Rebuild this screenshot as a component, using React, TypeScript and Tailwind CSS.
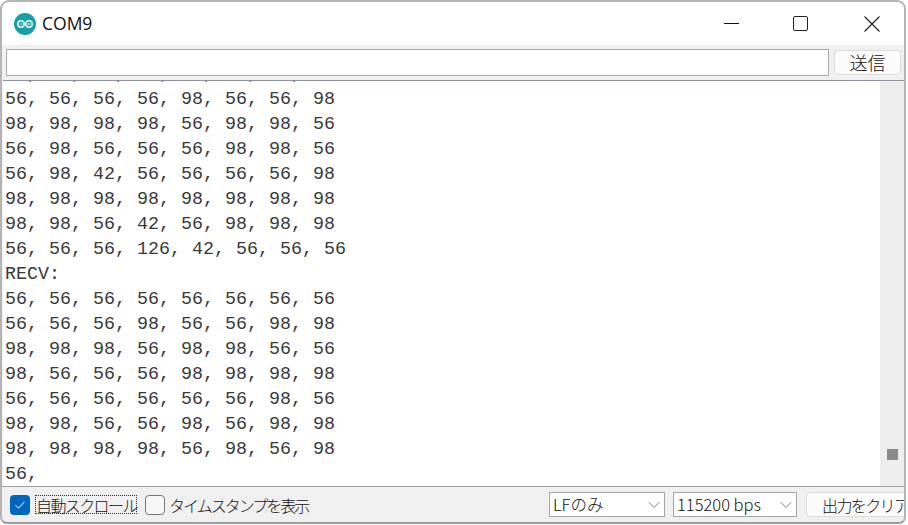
import { ChevronDown } from "lucide-react";

const lines = [
  "98, 56, 98, 56, 56, 98, 56, 98",
  "56, 56, 56, 56, 98, 56, 56, 98",
  "98, 98, 98, 98, 56, 98, 98, 56",
  "56, 98, 56, 56, 56, 98, 98, 56",
  "56, 98, 42, 56, 56, 56, 56, 98",
  "98, 98, 98, 98, 98, 98, 98, 98",
  "98, 98, 56, 42, 56, 98, 98, 98",
  "56, 56, 56, 126, 42, 56, 56, 56",
  "RECV:",
  "56, 56, 56, 56, 56, 56, 56, 56",
  "56, 56, 56, 98, 56, 56, 98, 98",
  "98, 98, 98, 56, 98, 98, 56, 56",
  "98, 56, 56, 56, 98, 98, 98, 98",
  "56, 56, 56, 56, 56, 56, 98, 56",
  "98, 98, 56, 56, 98, 56, 98, 98",
  "98, 98, 98, 98, 56, 98, 56, 98",
  "56,",
];

const jp = "font-['Noto_Sans_CJK_JP','Liberation_Sans',sans-serif]";

const ArduinoLogo = () => (
  <svg width="22" height="22" viewBox="0 0 22 22">
    <circle cx="11" cy="11" r="11" fill="#17a1a5" />
    <circle cx="7" cy="11" r="3.2" fill="none" stroke="#e6f6f6" strokeWidth="1.5" />
    <circle cx="15" cy="11" r="3.2" fill="none" stroke="#e6f6f6" strokeWidth="1.5" />
    <path d="M5.8 11h2.4M13.8 11h2.4M15 9.8v2.4" stroke="#e6f6f6" strokeWidth="0.9" />
  </svg>
);

const Dropdown = ({ label, width }: { label: string; width: string }) => (
  <div className={`${width} h-[25px] flex items-center justify-between border border-[#a6a6a6] bg-white pl-[3px]`}>
    <span className="text-[16.5px] font-light text-[#111] whitespace-nowrap">{label}</span>
    <ChevronDown size={20} strokeWidth={0.8} className="text-[#444]" />
  </div>
);

export default function App() {
  return (
    <div className="w-[908px] h-[525px] bg-white overflow-hidden">
      <div className={`w-[906px] h-[524px] flex flex-col rounded-t-[9px] rounded-b-[7px] border-2 border-[#b4b4b4] border-b-[#9c9c9c] overflow-hidden bg-[#f0f0f0] ${jp}`}>
        <div className="h-[43px] shrink-0 bg-white flex items-center pl-[12px]">
          <ArduinoLogo />
          <span className="ml-[6px] text-[17.5px] text-[#111] font-['Open_Sans',sans-serif]">COM9</span>
          <div className="ml-auto flex items-center">
            <div className="w-[59px] flex justify-center"><div className="w-[15px] h-px bg-[#111]" /></div>
            <div className="w-[78px] flex justify-center"><div className="w-[15px] h-[15px] border-[1.5px] border-[#222] rounded-[2px]" /></div>
            <div className="w-[65px] flex justify-center">
              <svg width="16" height="16" viewBox="0 0 16 16"><path d="M0.5 0.5l15 15M15.5 0.5l-15 15" stroke="#222" strokeWidth="1.2" /></svg>
            </div>
          </div>
        </div>
        <div className="h-[35px] shrink-0 flex items-center pl-[4px] pr-[3px] gap-[5px]">
          <div className="h-[27px] flex-1 bg-white border border-[#a9a9a9]" />
          <div className="w-[67px] h-[25px] bg-[#fbfbfb] border border-[#dcdcdc] rounded-[4px] flex items-center justify-center text-[18px] font-light text-[#111]">送信</div>
        </div>
        <div className="h-[406px] shrink-0 flex border-t border-[#8b929b] ml-px bg-white">
          <div className="flex-1 flex flex-col justify-end overflow-hidden pl-[2px] font-['Liberation_Mono',monospace] text-[18.33px] leading-[25px] text-[#3a3a3a] whitespace-pre">
            {lines.map((line, i) => (
              <div key={i} className="shrink-0 h-[25px] translate-y-[1px]">{line}</div>
            ))}
          </div>
          <div className="w-[24px] bg-[#eeeeee] flex flex-col justify-end items-center pb-[26px]">
            <div className="w-[11px] h-[11px] bg-[#8a8a8a]" />
          </div>
        </div>
        <div className="flex-1 flex items-center border-t border-[#a0a0a0] pl-[8px]">
          <div className="w-[20px] h-[20px] rounded-[4px] bg-[#0067c0] flex items-center justify-center">
            <svg width="12" height="10" viewBox="0 0 12 10"><path d="M1.5 5.2l3 3 6-6.5" fill="none" stroke="#fff" strokeWidth="1" /></svg>
          </div>
          <span className="ml-[5px] w-[102px] h-[19px] flex items-center border border-dotted border-[#333] text-[16px] tracking-[-1.6px] font-light leading-none text-[#111] whitespace-nowrap">自動スクロール</span>
          <div className="ml-[8px] w-[20px] h-[20px] rounded-[4px] border border-[#777] bg-[#f6f6f6]" />
          <span className="ml-[4px] text-[16px] tracking-[-2px] font-light text-[#111] whitespace-nowrap">タイムスタンプを表示</span>
          <div className="ml-auto flex items-center gap-[8px] -mr-[1px]">
            <Dropdown label="LFのみ" width="w-[116px]" />
            <Dropdown label="115200 bps" width="w-[124px]" />
            <div className="w-[99px] h-[25px] ml-px bg-[#fbfbfb] border border-[#dcdcdc] rounded-l-[4px] flex items-center pl-[15px] text-[16px] tracking-[-1.6px] font-light text-[#111] whitespace-nowrap">出力をクリア</div>
          </div>
        </div>
      </div>
    </div>
  );
}
